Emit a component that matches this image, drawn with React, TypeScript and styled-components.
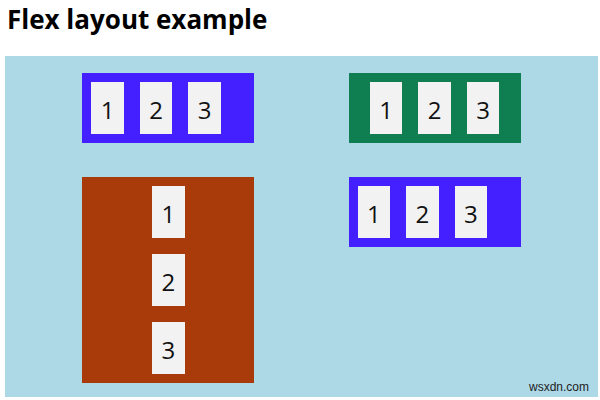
import styled, { createGlobalStyle } from "styled-components";

const GlobalStyle = createGlobalStyle`
    body {
        margin: 0;
        font-family: "Open Sans", "Noto Sans", sans-serif;
        background-color: white;
    }
`;

const Page = styled.div`
    position: relative;
    padding: 0 2px 0 5px;
`;

const Title = styled.h2`
    margin: 0;
    padding: 2px 0 0 2px;
    height: 54px;
    font-size: 26px;
    line-height: 34px;
    font-weight: bold;
    color: black;
`;

const Stage = styled.div`
    display: flex;
    flex-wrap: wrap;
    justify-content: space-evenly;
    align-items: flex-start;
    height: 341px;
    background-color: lightblue;
`;

const Box = styled.div<{ $bg: string; $dir?: string; $justify?: string }>`
    box-sizing: border-box;
    width: 172px;
    margin: 17px;
    display: flex;
    flex-direction: ${(p) => p.$dir || "row"};
    justify-content: ${(p) => p.$justify || "flex-start"};
    align-items: center;
    background-color: ${(p) => p.$bg};
    border: 1px solid ${(p) => p.$bg};
`;

const Item = styled.div`
    width: 32.5px;
    height: 52px;
    margin: 8px;
    padding-top: 2px;
    box-sizing: border-box;
    display: flex;
    align-items: center;
    justify-content: center;
    background-color: #f2f2f2;
    color: #111;
    font-size: 24px;
`;

const Watermark = styled.span`
    position: absolute;
    right: 11px;
    bottom: 3px;
    font-family: "Liberation Sans", Arial, sans-serif;
    font-size: 12px;
    color: #222;
`;

function Numbers() {
    return <>
        <Item>1</Item>
        <Item>2</Item>
        <Item>3</Item>
    </>
}

export default function App() {
    return <>
    <GlobalStyle />
    <Page>
        <Title>Flex layout example</Title>
        <Stage>
            <Box $bg="#441fff"><Numbers /></Box>
            <Box $bg="#0f7f51" $justify="center"><Numbers /></Box>
            <Box $bg="#a93b0a" $dir="column"><Numbers /></Box>
            <Box $bg="#441fff"><Numbers /></Box>
        </Stage>
        <Watermark>wsxdn.com</Watermark>
    </Page>
    </>
}
